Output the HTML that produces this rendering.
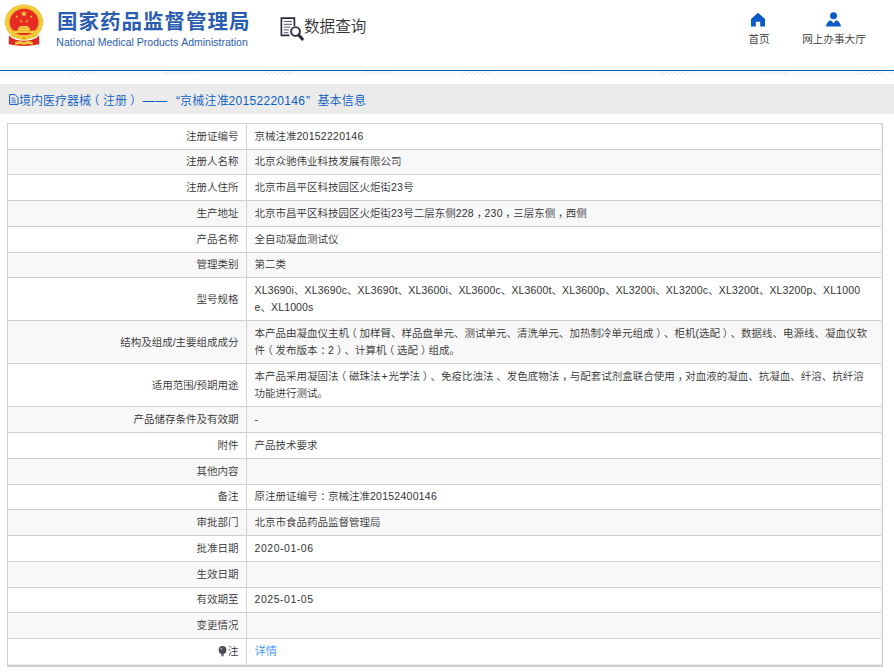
<!DOCTYPE html>
<html lang="zh-CN">
<head>
<meta charset="utf-8">
<title>国家药品监督管理局 数据查询</title>
<style>
html,body{margin:0;padding:0;}
body{text-spacing-trim:space-all;font-kerning:none;width:894px;height:672px;position:relative;overflow:hidden;background:#fff;
 font-family:"Liberation Sans","Noto Sans CJK SC DemiLight","Noto Sans CJK SC",sans-serif;color:#333;}
.abs{position:absolute;white-space:nowrap;}
#hdr-title{font-family:"Liberation Sans","Noto Sans CJK SC",sans-serif;left:57px;top:7px;font-size:20.5px;font-weight:bold;color:#2a5db0;line-height:30px;letter-spacing:1px;}
#hdr-sub{left:56.3px;top:36px;font-size:10.5px;color:#2a5db0;line-height:12px;}
#dq{left:304px;top:16px;font-size:15.6px;color:#333;line-height:22px;}
.nav{font-size:10.6px;color:#333;line-height:14px;text-align:center;}
#blueline{left:0;top:70px;width:894px;height:1px;background:#0b5cb8;}
#hatch{left:0;top:71px;width:894px;height:4px;
 background:repeating-linear-gradient(135deg,#fff 0,#fff 1.9px,#ececec 1.9px,#ececec 2.8px);}
#bar{left:0;top:84px;width:894px;height:30px;background:#ebebeb;}
#bartxt{left:19.4px;top:85.5px;line-height:30px;font-size:12px;color:#0b5cc0;}
#bartxt span{position:absolute;top:0;}
#frame{left:7px;top:123px;width:874px;height:541px;border:1px solid #d0d0d0;border-bottom-width:2px;background:#ececf1;}
.row{position:absolute;left:8px;width:873px;border-top:1px solid #d0d0d0;background:#fff;}
.row.g{background:#f8f8f8;}
.row::after{content:"";position:absolute;left:238px;top:0;bottom:0;width:1px;background:#d0d0d0;}
.l,.v{position:absolute;top:0;bottom:0;display:flex;align-items:center;font-size:10.5px;line-height:17.5px;color:#333;white-space:nowrap;}
.n{letter-spacing:.25px;}
.m{letter-spacing:.15px;}
.d{letter-spacing:.54px;}
.pr{position:relative;left:2.8px;}
.pl{position:relative;left:-2.8px;}
.two .l{padding-top:2px;}
.l{right:642.4px;justify-content:flex-end;}
.v{left:246.5px;}
a{color:#3d94f6;text-decoration:none;font-size:11.3px;}
</style>
</head>
<body>
<!-- header -->
<svg class="abs" style="left:0;top:0" width="50" height="50" viewBox="0 0 50 50">
 <ellipse cx="24" cy="22" rx="19.200" ry="17.600" fill="#f1c232"/>
 <ellipse cx="24" cy="22" rx="17.300" ry="15.800" fill="none" stroke="#f7dc58" stroke-width="1.200" opacity=".7"/>
 <ellipse cx="24.100" cy="22" rx="14.400" ry="13.200" fill="#e62b22"/>
 <path d="M11.500 33.500 Q24 40 36.500 33.500 L37.500 36 Q24 42.500 10.500 36Z" fill="#f1c232"/>
 <path d="M8.900 35.200 Q11 38.200 16 39.800 Q24 41.800 32 39.800 Q37 38.200 39.100 35.200 L39.300 44.200 Q24 47.600 8.700 44.200Z" fill="#dd2a22"/>
 <path d="M13 30.700h22v2.300h-22z" fill="#f3cd3e"/>
 <path d="M17.900 27.500h11.900v3.300h-11.900z" fill="#f3cd3e"/>
 <path d="M19.300 27.600l.8-1.700h7.700l.8 1.700z" fill="#f6d84e"/>
 <ellipse cx="23.900" cy="37.800" rx="4.300" ry="2.500" fill="#f3cd3e"/>
 <ellipse cx="23.900" cy="37.900" rx="2" ry="1" fill="#e0a020"/>
 <path d="M15 42.200 Q19.500 39.800 23.900 42.200 Q28.300 39.800 32.800 42.200 L32.500 45 Q28.300 43 23.900 45.200 Q19.500 43 15.300 45Z" fill="#f1c232"/>
 <polygon points="24.00,10.40 24.80,12.70 27.23,12.75 25.29,14.22 26.00,16.55 24.00,15.16 22.00,16.55 22.71,14.22 20.77,12.75 23.20,12.70" fill="#f5d23c"/><polygon points="17.50,15.31 17.28,16.44 18.27,17.03 17.13,17.18 16.87,18.29 16.38,17.25 15.24,17.35 16.07,16.57 15.63,15.51 16.63,16.06" fill="#f5d23c"/><polygon points="30.50,15.31 31.37,16.06 32.37,15.51 31.93,16.57 32.76,17.35 31.62,17.25 31.13,18.29 30.87,17.18 29.73,17.03 30.72,16.44" fill="#f5d23c"/><polygon points="21.48,19.62 21.66,20.76 22.78,20.98 21.77,21.50 21.90,22.64 21.09,21.83 20.05,22.31 20.57,21.29 19.79,20.45 20.92,20.62" fill="#f5d23c"/><polygon points="26.62,19.62 27.18,20.62 28.31,20.45 27.53,21.29 28.05,22.31 27.01,21.83 26.20,22.64 26.33,21.50 25.32,20.98 26.44,20.76" fill="#f5d23c"/>
</svg>
<div class="abs" id="hdr-title">国家药品监督管理局</div>
<div class="abs" id="hdr-sub">National Medical Products Administration</div>
<svg class="abs" style="left:279px;top:16px" width="26" height="26" viewBox="0 0 26 26" fill="none" stroke="#2d2b3e">
 <path d="M15.400 10V2.200H2.400v17.200H10.500" stroke-width="1.700"/>
 <path d="M4.800 5.500h8.200M4.800 8.300h8.200M4.800 11.100h6.500M4.800 13.900h5M4.800 16.700h4.500" stroke-width="1" opacity=".8"/>
 <circle cx="16.500" cy="15.500" r="4.400" stroke-width="1.900" fill="#fff"/>
 <path d="M19.900 19.200l3.400 3.900" stroke-width="3" stroke-linecap="round"/>
</svg>
<div class="abs" id="dq">数据查询</div>
<svg class="abs" style="left:750px;top:12px" width="16" height="15" viewBox="0 0 16 15"><path d="M8 .8L1 7v7.500h4.800V9.800h4.400v4.700H15V7z" fill="#0b5cc4"/></svg>
<div class="abs nav" style="left:738px;top:32px;width:42px;">首页</div>
<svg class="abs" style="left:825px;top:11px" width="17" height="16" viewBox="0 0 17 16"><circle cx="8.500" cy="4.800" r="3.500" fill="#0b5cc4"/><path d="M1 15.500c.5-4 3-6 5-6.300l2.500 3 2.500-3c2 .3 4.500 2.300 5 6.300z" fill="#0b5cc4"/></svg>
<div class="abs nav" style="left:793px;top:32px;width:82px;">网上办事大厅</div>
<div class="abs" id="blueline"></div>
<div class="abs" id="hatch"></div>
<div class="abs" id="bar"></div>
<svg class="abs" style="left:8.5px;top:93.800px" width="10" height="11" viewBox="0 0 10 11" fill="none" stroke="#0b5cc0" stroke-width="1"><path d="M.6.600h5.400l3 3v6.800h-8.400z"/><path d="M2.400 4.200h3.600M2.400 6.200h4.600M2.400 8.200h4.600" stroke-width=".75"/></svg>
<div class="abs" id="bartxt"><span style="left:-.3px">境内医疗器械</span><span style="left:68px">（</span><span style="left:83.500px">注册</span><span style="left:110.500px">）</span><span style="left:123px;letter-spacing:.8px">——</span><span style="left:156.500px">“</span><span style="left:160.500px;letter-spacing:.33px">京械注准</span><span style="left:209.100px;letter-spacing:.31px">20152220146</span><span style="left:286.700px">”</span><span style="left:298px;letter-spacing:.2px">基本信息</span></div>
<!-- table -->
<div class="abs" id="frame"></div>
<div class="row" style="top:123px;height:25px"><div class="l">注册证编号</div><div class="v"><div>京械注准<span class="n">20152220146</span></div></div></div>
<div class="row g" style="top:149px;height:24px"><div class="l">注册人名称</div><div class="v"><div>北京众驰伟业科技发展有限公司</div></div></div>
<div class="row" style="top:174px;height:25px"><div class="l">注册人住所</div><div class="v"><div>北京市昌平区科技园区火炬街<span class="n">23</span>号</div></div></div>
<div class="row g" style="top:200px;height:25px"><div class="l">生产地址</div><div class="v"><div>北京市昌平区科技园区火炬街<span class="n">23</span>号二层东侧<span class="n">228</span><span class="pr">，</span><span class="n">230</span><span class="pr">，</span>三层东侧<span class="pr">，</span>西侧</div></div></div>
<div class="row" style="top:226px;height:25px"><div class="l">产品名称</div><div class="v"><div>全自动凝血测试仪</div></div></div>
<div class="row g" style="top:252px;height:24px"><div class="l">管理类别</div><div class="v"><div>第二类</div></div></div>
<div class="row two" style="top:277px;height:42px"><div class="l">型号规格</div><div class="v"><div><span class="m">XL3690i</span>、<span class="m">XL3690c</span>、<span class="m">XL3690t</span>、<span class="m">XL3600i</span>、<span class="m">XL3600c</span>、<span class="m">XL3600t</span>、<span class="m">XL3600p</span>、<span class="m">XL3200i</span>、<span class="m">XL3200c</span>、<span class="m">XL3200t</span>、<span class="m">XL3200p</span>、<span class="m">XL1000</span><br><span class="m">e</span>、<span class="m">XL1000s</span></div></div></div>
<div class="row g two" style="top:320px;height:42px"><div class="l">结构及组成/主要组成成分</div><div class="v"><div>本产品由凝血仪主机<span class="pl">（</span>加样臂、样品盘单元、测试单元、清洗单元、加热制冷单元组成<span class="pr">）</span>、柜机(选配<span class="pr">）</span>、数据线、电源线、凝血仪软<br>件<span class="pl">（</span>发布版本<span class="pr">：</span><span class="n">2</span><span class="pr">）</span>、计算机<span class="pl">（</span>选配<span class="pr">）</span>组成。</div></div></div>
<div class="row two" style="top:363px;height:42px"><div class="l">适用范围/预期用途</div><div class="v"><div>本产品采用凝固法<span class="pl">（</span>磁珠法<span style="margin:0 .9px 0 .9px">+</span>光学法<span class="pr">）</span>、免疫比浊法 、发色底物法<span class="pr">，</span>与配套试剂盒联合使用<span class="pr">，</span>对血液的凝血、抗凝血、纤溶、抗纤溶<br>功能进行测试。</div></div></div>
<div class="row g" style="top:406px;height:25px"><div class="l">产品储存条件及有效期</div><div class="v"><div>-</div></div></div>
<div class="row" style="top:432px;height:25px"><div class="l">附件</div><div class="v"><div>产品技术要求</div></div></div>
<div class="row g" style="top:458px;height:25px"><div class="l">其他内容</div><div class="v"><div></div></div></div>
<div class="row" style="top:484px;height:24px"><div class="l">备注</div><div class="v"><div>原注册证编号<span class="pr">：</span>京械注准<span class="n">20152400146</span></div></div></div>
<div class="row g" style="top:509px;height:25px"><div class="l">审批部门</div><div class="v"><div>北京市食品药品监督管理局</div></div></div>
<div class="row" style="top:535px;height:25px"><div class="l">批准日期</div><div class="v"><div><span class="d">2020-01-06</span></div></div></div>
<div class="row g" style="top:561px;height:25px"><div class="l">生效日期</div><div class="v"><div></div></div></div>
<div class="row" style="top:587px;height:24px"><div class="l">有效期至</div><div class="v"><div><span class="d">2025-01-05</span></div></div></div>
<div class="row g" style="top:612px;height:25px"><div class="l">变更情况</div><div class="v"><div></div></div></div>
<div class="row" style="top:638px;height:25px"><div class="l"><svg width="9" height="11" viewBox="0 0 9 11" style="margin-right:1.2px;position:relative;top:0.3px"><circle cx="4.5" cy="4" r="3.9" fill="#4b4b53"/><path d="M2.8 6.5h3.4l-.4 2.2h-2.600z" fill="#4b4b53"/><rect x="3.300" y="9" width="2.400" height="1.300" fill="#6a6a72"/><circle cx="3.300" cy="2.800" r="1.100" fill="#9a9aa2"/></svg>注</div><div class="v"><div><a>详情</a></div></div></div>
</body>
</html>
